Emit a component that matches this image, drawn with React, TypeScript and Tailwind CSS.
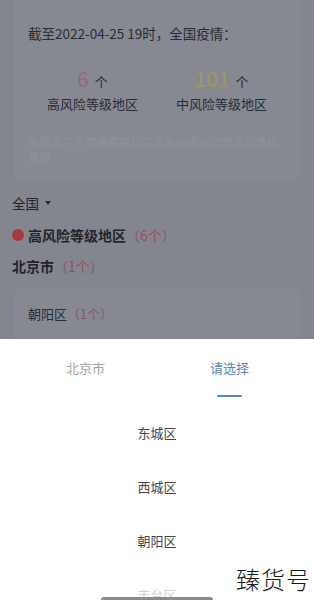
const font = { fontFamily: '"Noto Sans CJK SC", "Noto Sans", sans-serif' };

const districts = ['东城区', '西城区', '朝阳区', '丰台区'];

export default function App() {
    return (
        <div className="relative w-[314px] h-[600px] overflow-hidden flex flex-col bg-[#84868f]" style={font}>
            {/* dimmed page behind the sheet */}
            <div className="h-[339px] shrink-0 overflow-hidden">
                <div className="mx-[15px] bg-[#878992] border-x border-b border-[#8b8d96] rounded-b-md pt-[23px] px-[12px] pb-[14px]">
                    <div className="text-[13.5px] leading-[20px] text-[#2a2b30]">截至2022-04-25 19时，全国疫情：</div>
                    <div className="grid grid-cols-2 mt-[23px]">
                        <div className="flex flex-col items-center">
                            <div className="flex items-baseline gap-[6px] leading-[24px]">
                                <span className="text-[21px] text-[#a2646c]">6</span>
                                <span className="text-[13px] text-[#2a2b30]">个</span>
                            </div>
                            <div className="text-[13px] leading-[18px] text-[#2a2b30] mt-[1px]">高风险等级地区</div>
                        </div>
                        <div className="flex flex-col items-center">
                            <div className="flex items-baseline gap-[6px] leading-[24px]">
                                <span className="text-[21px] text-[#a39858]">101</span>
                                <span className="text-[13px] text-[#2a2b30]">个</span>
                            </div>
                            <div className="text-[13px] leading-[18px] text-[#2a2b30] mt-[1px]">中风险等级地区</div>
                        </div>
                    </div>
                    <div className="mt-[22px] text-[11.4px] leading-[15px] text-[#8f919a]">
                        由国家卫生健康委每日汇总各地报送疫情风险等级数据
                    </div>
                </div>

                <div className="px-[12px] mt-[14px]">
                    <div className="flex items-center gap-[6px] text-[13.5px] leading-[18px] text-[#23242a]">
                        全国
                        <span className="w-0 h-0 border-x-[3.5px] border-x-transparent border-t-[4px] border-t-[#2a2b30]" />
                    </div>
                    <div className="flex items-center mt-[13px] leading-[20px]">
                        <span className="w-[12px] h-[12px] rounded-full bg-[#a63a3e] mr-[4px]" />
                        <span className="text-[14px] font-bold text-[#23242a]">高风险等级地区</span>
                        <span className="text-[14px] text-[#93515b]">（6个）</span>
                    </div>
                    <div className="flex items-center mt-[11px] leading-[20px]">
                        <span className="text-[14px] font-bold text-[#23242a]">北京市</span>
                        <span className="text-[14px] text-[#93515b]">（1个）</span>
                    </div>
                </div>

                <div className="mx-[15px] mt-[13px] h-[80px] bg-[#878992] border border-[#8b8d96] rounded-md px-[12px] pt-[15px]">
                    <div className="flex items-center text-[13px] leading-[18px]">
                        <span className="text-[#2a2b30]">朝阳区</span>
                        <span className="text-[#8c5660]">（1个）</span>
                    </div>
                </div>
            </div>

            {/* bottom sheet */}
            <div className="flex-1 bg-white flex flex-col">
                <div className="flex pt-[20px] pl-[66px] gap-[105px] text-[13px] leading-[18px]">
                    <span className="text-[#a3a3a3]">北京市</span>
                    <div className="flex flex-col items-center">
                        <span className="text-[#5a86b8]">请选择</span>
                        <span className="mt-[18px] w-[25px] h-[2px] bg-[#5a86b8] rounded-full" />
                    </div>
                </div>
                <div className="mt-[9px] flex flex-col">
                    {districts.map((d, i) => (
                        <div
                            key={d}
                            className={
                                i === 3
                                    ? 'h-[54px] flex items-center justify-center text-[13px] text-[#d2d2d2]'
                                    : 'h-[54px] flex items-center justify-center text-[13px] text-[#454545]'
                            }
                        >
                            {d}
                        </div>
                    ))}
                </div>
            </div>

            <div className="absolute left-[101px] bottom-[-3px] w-[112px] h-[6px] rounded-full bg-[#8c8c8c]" />
            <div className="absolute right-[3px] top-[564px] text-[24px] leading-[30px] font-light text-[#1a1a1a] tracking-[1px]">臻货号</div>
        </div>
    );
}
